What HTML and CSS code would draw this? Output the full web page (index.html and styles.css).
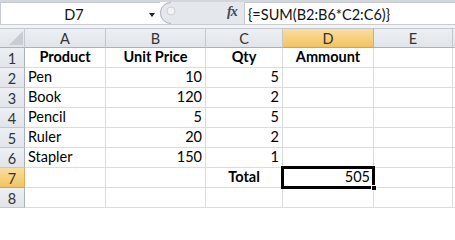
FILE: index.html
```html
<!DOCTYPE html>
<html>
<head>
<meta charset="utf-8">
<link rel="stylesheet" href="styles.css">
</head>
<body>
<div class="formula-bar">
  <div class="namebox">
    <span class="name">D7</span>
    <span class="drop"></span>
  </div>
  <div class="tools">
    <svg class="splitter" width="22" height="22" viewBox="0 0 22 22">
      <rect x="0" y="0" width="22" height="22" fill="#ffffff"/>
      <path d="M22 0 H11 A11 11 0 0 0 11 22 H22 Z" fill="#e4e7eb"/>
      <path d="M11 0.5 A10.5 10.5 0 0 0 11 21.5" fill="none" stroke="#aeb5bd" stroke-width="1"/>
      <circle cx="11" cy="9" r="4" fill="#f1f3f5" stroke="#c3c8ce" stroke-width="0.8"/>
    </svg>
    <span class="fx">fx</span>
  </div>
  <div class="formula">{=SUM(B2:B6*C2:C6)}</div>
</div>
<div class="strip"></div>
<div class="sheet">
  <div class="hd corner"><svg width="14" height="14" viewBox="0 0 14 14"><polygon points="14,0 14,14 0,14" fill="#c9cdd3"/></svg></div>
  <div class="hd col">A</div>
  <div class="hd col">B</div>
  <div class="hd col">C</div>
  <div class="hd col sel">D</div>
  <div class="hd col">E</div>
  <div class="hd col fill"></div>

  <div class="hd row">1</div>
  <div class="c b ctr">Product</div>
  <div class="c b ctr">Unit Price</div>
  <div class="c b ctr">Qty</div>
  <div class="c b ctr">Ammount</div>
  <div class="c"></div>
  <div class="c fill"></div>

  <div class="hd row">2</div>
  <div class="c">Pen</div>
  <div class="c num">10</div>
  <div class="c num">5</div>
  <div class="c"></div>
  <div class="c"></div>
  <div class="c fill"></div>

  <div class="hd row">3</div>
  <div class="c">Book</div>
  <div class="c num">120</div>
  <div class="c num">2</div>
  <div class="c"></div>
  <div class="c"></div>
  <div class="c fill"></div>

  <div class="hd row">4</div>
  <div class="c">Pencil</div>
  <div class="c num">5</div>
  <div class="c num">5</div>
  <div class="c"></div>
  <div class="c"></div>
  <div class="c fill"></div>

  <div class="hd row">5</div>
  <div class="c">Ruler</div>
  <div class="c num">20</div>
  <div class="c num">2</div>
  <div class="c"></div>
  <div class="c"></div>
  <div class="c fill"></div>

  <div class="hd row">6</div>
  <div class="c">Stapler</div>
  <div class="c num">150</div>
  <div class="c num">1</div>
  <div class="c"></div>
  <div class="c"></div>
  <div class="c fill"></div>

  <div class="hd row sel">7</div>
  <div class="c"></div>
  <div class="c"></div>
  <div class="c b ctr">Total</div>
  <div class="c num active">505<span class="selbox"></span><span class="handle"></span></div>
  <div class="c"></div>
  <div class="c fill"></div>

  <div class="hd row">8</div>
  <div class="c"></div>
  <div class="c"></div>
  <div class="c"></div>
  <div class="c"></div>
  <div class="c"></div>
  <div class="c fill"></div>
</div>
</body>
</html>
```
FILE: styles.css
```css
* { box-sizing: border-box; }
html, body { margin: 0; padding: 0; }
body {
  width: 455px;
  height: 209px;
  overflow: hidden;
  background: #ffffff;
  font-family: Lato, "Liberation Sans", sans-serif;
  font-size: 14.5px;
  color: #000;
}
.formula-bar {
  display: flex;
  height: 24px;
  background: #e6e9ed;
  border-top: 2px solid #d3d7dc;
}
.namebox {
  width: 160px;
  background: #fff;
  border-top: 1px solid #c6cbd1;
  border-left: 1px solid #c6cbd1;
  display: flex;
  align-items: center;
}
.name {
  width: 146px;
  text-align: center;
  color: #111;
  padding-top: 1px;
}
.drop {
  width: 0;
  height: 0;
  border-left: 3.5px solid transparent;
  border-right: 3.5px solid transparent;
  border-top: 4px solid #222;
  margin-left: 2px;
  margin-top: 2px;
}
.tools {
  width: 84px;
  display: flex;
  align-items: flex-start;
  background: #e4e7eb;
}
.splitter { display: block; }
.fx {
  margin-left: 45px;
  margin-top: 2px;
  font-family: "Liberation Serif", "DejaVu Serif", serif;
  font-style: italic;
  font-weight: bold;
  font-size: 14px;
  color: #454a52;
  letter-spacing: -1px;
}
.formula {
  flex: 1;
  background: #fff;
  border-top: 1px solid #c6cbd1;
  border-left: 1px solid #c6cbd1;
  padding-left: 3px;
  display: flex;
  align-items: center;
  color: #111;
  padding-top: 1px;
}
.strip {
  height: 4px;
  background: #f3f4f6;
  border-top: 1px solid #c9cdd2;
}
.sheet {
  display: grid;
  grid-template-columns: 25px 81px 100px 77px 91px 79px 1fr;
  grid-auto-rows: 20px;
}
.hd {
  background: linear-gradient(#eceff3, #e1e5ea);
  border-right: 1px solid #c3c8cf;
  border-bottom: 1px solid #c3c8cf;
  color: #333;
  display: flex;
  align-items: center;
  justify-content: center;
  padding-top: 1px;
}
.hd.col { border-top: 1px solid #c3c8cf; border-bottom-color: #aab1ba; }
.hd.corner {
  border-top: 1px solid #c3c8cf;
  align-items: flex-end;
  justify-content: flex-end;
  padding: 0 1px 2px 0;
  border-bottom-color: #aab1ba;
}
.hd.corner svg { display: block; }
.hd.row { border-right-color: #aab1ba; }
.hd.sel {
  background: linear-gradient(#f9dea0, #f2c45f);
  border-right-color: #e0ad50;
  border-bottom-color: #d7a14a;
}
.c {
  border-right: 1px solid #dadcdd;
  border-bottom: 1px solid #dadcdd;
  padding: 0 3px;
  display: flex;
  align-items: flex-end;
  padding-bottom: 1px;
  white-space: nowrap;
  line-height: 18px;
}
.b { font-weight: bold; }
.ctr { justify-content: center; }
.num { justify-content: flex-end; }
.fill { border-right: none; }
.active { position: relative; }
.selbox {
  position: absolute;
  left: -2px;
  top: -2px;
  right: -2px;
  bottom: -2px;
  border: 3px solid #000;
  pointer-events: none;
}
.handle {
  position: absolute;
  right: -4px;
  bottom: -4px;
  width: 6px;
  height: 6px;
  background: #000;
  border: 1px solid #fff;
}
```
